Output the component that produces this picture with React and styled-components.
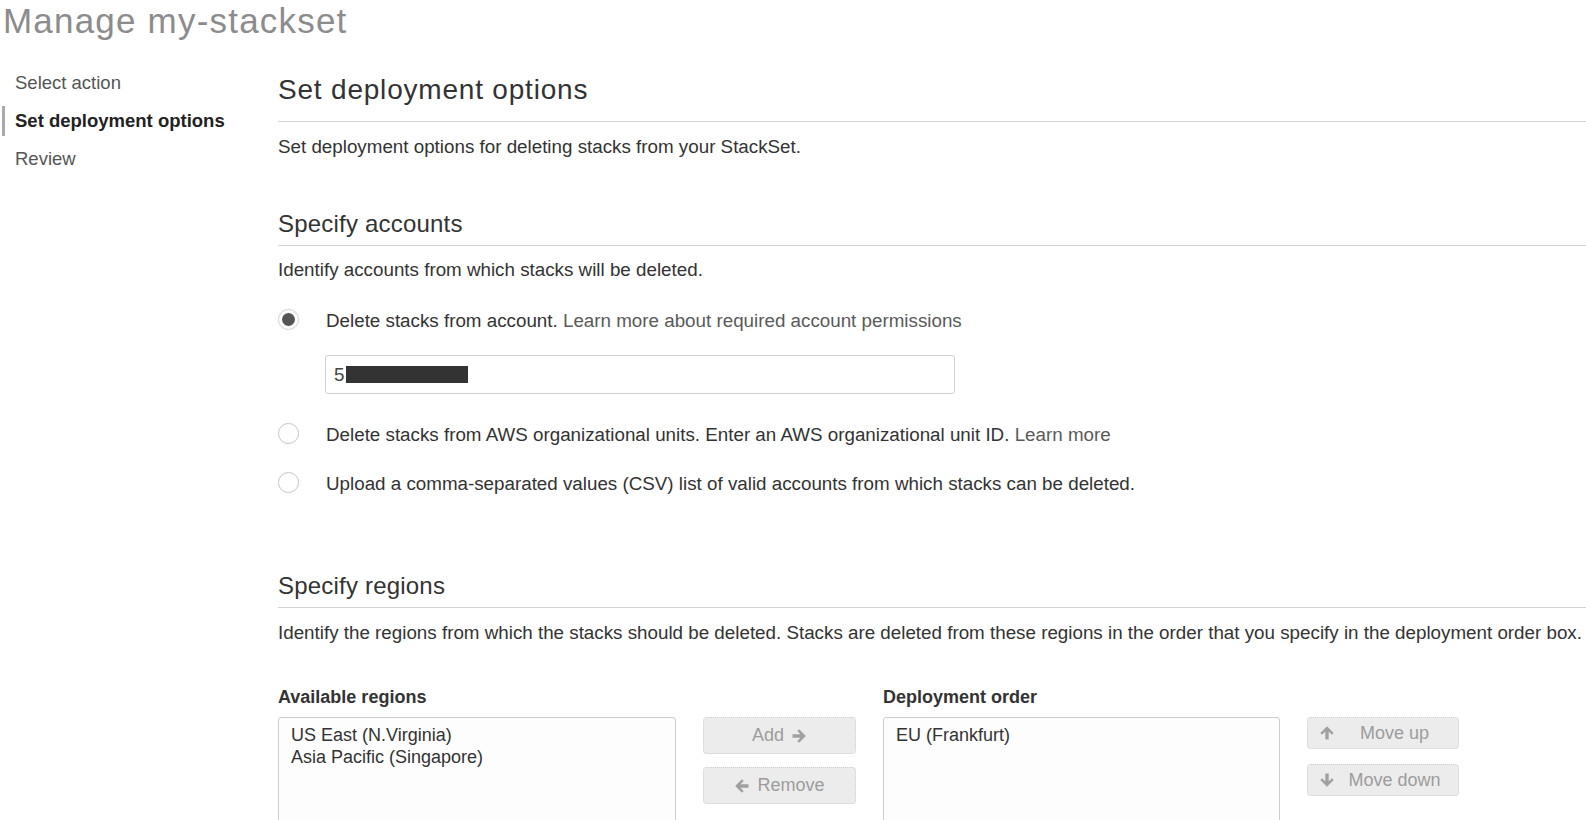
import React from "react";
import styled, { createGlobalStyle } from "styled-components";

const GlobalStyle = createGlobalStyle`
  body {
    margin: 0;
    background: #fff;
    color: #333;
    font-family: "Liberation Sans", Arial, Helvetica, sans-serif;
    overflow-x: hidden;
  }
`;

const Page = styled.div`
  padding-top: 1px;
`;

const Title = styled.h1`
  margin: 0;
  padding-left: 3px;
  font-size: 35px;
  font-weight: normal;
  letter-spacing: 1.2px;
  line-height: 40px;
  color: #8c8c8c;
`;

const Layout = styled.div`
  display: flex;
`;

const Sidebar = styled.nav`
  flex: none;
  width: 278px;
  box-sizing: border-box;
  padding: 27px 0 0 2px;
  display: flex;
  flex-direction: column;
  gap: 8px;
`;

const NavItem = styled.div`
  font-size: 18.5px;
  line-height: 30px;
  padding-left: 10px;
  border-left: 3px solid ${(p) => (p.$active ? "#a9a9a9" : "transparent")};
  font-weight: ${(p) => (p.$active ? "bold" : "normal")};
  color: ${(p) => (p.$active ? "#222" : "#555")};
`;

const Main = styled.main`
  flex: 1;
  min-width: 0;
  padding-top: 31px;
`;

const PageHeading = styled.h2`
  margin: 0;
  font-size: 28px;
  font-weight: normal;
  letter-spacing: 0.8px;
  line-height: 36px;
  padding-bottom: 13px;
  border-bottom: 1px solid #d4d4d4;
  color: #333;
`;

const SectionHeading = styled.h3`
  margin: ${(p) => p.$mt}px 0 0;
  font-size: 24px;
  font-weight: normal;
  letter-spacing: 0.2px;
  line-height: 30px;
  padding-bottom: 6px;
  border-bottom: 1px solid #d4d4d4;
  color: #333;
`;

const Text = styled.p`
  margin: ${(p) => p.$mt}px 0 0;
  font-size: 18.8px;
  line-height: 24px;
  color: #333;
  white-space: nowrap;
`;

const Link = styled.span`
  color: #5a5a5a;
`;

const RadioRow = styled.div`
  margin-top: ${(p) => p.$mt}px;
  display: grid;
  grid-template-columns: 48px 1fr;
  align-items: center;
  font-size: 18.8px;
  line-height: 24px;
  color: #333;
  white-space: nowrap;
`;

const Circle = styled.span`
  width: 21px;
  height: 21px;
  margin-top: -3px;
  box-sizing: border-box;
  border-radius: 50%;
  border: 1px solid ${(p) => (p.$checked ? "#d6d6d6" : "#c9c9c9")};
  background: #fff;
  box-shadow: 0 0 1px rgba(0, 0, 0, 0.08);
  display: grid;
  place-items: center;
`;

const Dot = styled.span`
  width: 13px;
  height: 13px;
  border-radius: 50%;
  background: #555;
`;

const Field = styled.div`
  margin: 22px 0 0 47px;
  width: 630px;
  height: 39px;
  box-sizing: border-box;
  border: 1px solid #cfcfcf;
  border-radius: 3px;
  padding: 0 8px;
  display: flex;
  align-items: center;
  font-size: 18.8px;
  color: #444;
`;

const Redacted = styled.span`
  width: 122px;
  height: 17px;
  margin-left: 2px;
  background: #333;
`;

const Regions = styled.div`
  margin-top: 40px;
  display: flex;
  gap: 27px;
`;

const ListColumn = styled.div`
  flex: none;
  width: ${(p) => p.$w}px;
  display: flex;
  flex-direction: column;
  gap: 8px;
`;

const Label = styled.div`
  font-size: 18px;
  font-weight: bold;
  line-height: 24px;
  color: #333;
`;

const ListBox = styled.div`
  height: 150px;
  box-sizing: border-box;
  border: 1px solid #cdcdcd;
  border-radius: 3px;
  background: #fdfdfd;
  padding: 6px 12px;
  font-size: 18px;
  line-height: 22px;
  color: #333;
`;

const ButtonStack = styled.div`
  flex: none;
  width: ${(p) => p.$w}px;
  margin-top: 32px;
  display: flex;
  flex-direction: column;
  gap: ${(p) => p.$gap}px;
`;

const Button = styled.button`
  height: ${(p) => p.$h}px;
  box-sizing: border-box;
  border: 1px dotted #cfcfcf;
  border-radius: 4px;
  background: #ececec;
  color: #9c9c9c;
  font-family: inherit;
  font-size: 18px;
  display: flex;
  align-items: center;
  justify-content: center;
  gap: 7px;
  padding: 0 11px;
  cursor: default;
`;

const ButtonLabel = styled.span`
  flex: 1;
  text-align: center;
`;

const ArrowSvg = styled.svg`
  flex: none;
  width: 16px;
  height: 16px;
  fill: #a0a0a0;
  transform: rotate(${(p) => p.$deg}deg);
`;

const turns = { right: 0, down: 90, left: 180, up: 270 };

function Arrow({ dir }) {
  return (
    <ArrowSvg viewBox="0 0 16 16" $deg={turns[dir]}>
      <path d="M1.5 6.3h8L6.3 3.1l1.8-1.8L14.8 8l-6.7 6.7-1.8-1.8 3.2-3.2h-8z" />
    </ArrowSvg>
  );
}

function Radio({ checked, children, mt }) {
  return (
    <RadioRow $mt={mt}>
      <Circle $checked={checked}>{checked && <Dot />}</Circle>
      <span>{children}</span>
    </RadioRow>
  );
}

export default function App() {
  return (
    <Page>
      <GlobalStyle />
      <Title>Manage my-stackset</Title>
      <Layout>
        <Sidebar>
          <NavItem>Select action</NavItem>
          <NavItem $active>Set deployment options</NavItem>
          <NavItem>Review</NavItem>
        </Sidebar>
        <Main>
          <PageHeading>Set deployment options</PageHeading>
          <Text $mt={13}>Set deployment options for deleting stacks from your StackSet.</Text>

          <SectionHeading $mt={50}>Specify accounts</SectionHeading>
          <Text $mt={12}>Identify accounts from which stacks will be deleted.</Text>
          <Radio checked mt={27}>
            Delete stacks from account. <Link>Learn more about required account permissions</Link>
          </Radio>
          <Field>
            5<Redacted />
          </Field>
          <Radio mt={29}>
            Delete stacks from AWS organizational units. Enter an AWS organizational unit ID.{" "}
            <Link>Learn more</Link>
          </Radio>
          <Radio mt={25}>
            Upload a comma-separated values (CSV) list of valid accounts from which stacks can be deleted.
          </Radio>

          <SectionHeading $mt={75}>Specify regions</SectionHeading>
          <Text $mt={13}>
            Identify the regions from which the stacks should be deleted. Stacks are deleted from these
            regions in the order that you specify in the deployment order box.
          </Text>

          <Regions>
            <ListColumn $w={398}>
              <Label>Available regions</Label>
              <ListBox>
                <div>US East (N.Virginia)</div>
                <div>Asia Pacific (Singapore)</div>
              </ListBox>
            </ListColumn>
            <ButtonStack $w={153} $gap={13}>
              <Button $h={37}>
                Add <Arrow dir="right" />
              </Button>
              <Button $h={37}>
                <Arrow dir="left" /> Remove
              </Button>
            </ButtonStack>
            <ListColumn $w={397}>
              <Label>Deployment order</Label>
              <ListBox>
                <div>EU (Frankfurt)</div>
              </ListBox>
            </ListColumn>
            <ButtonStack $w={152} $gap={15}>
              <Button $h={32}>
                <Arrow dir="up" />
                <ButtonLabel>Move up</ButtonLabel>
              </Button>
              <Button $h={32}>
                <Arrow dir="down" />
                <ButtonLabel>Move down</ButtonLabel>
              </Button>
            </ButtonStack>
          </Regions>
        </Main>
      </Layout>
    </Page>
  );
}
